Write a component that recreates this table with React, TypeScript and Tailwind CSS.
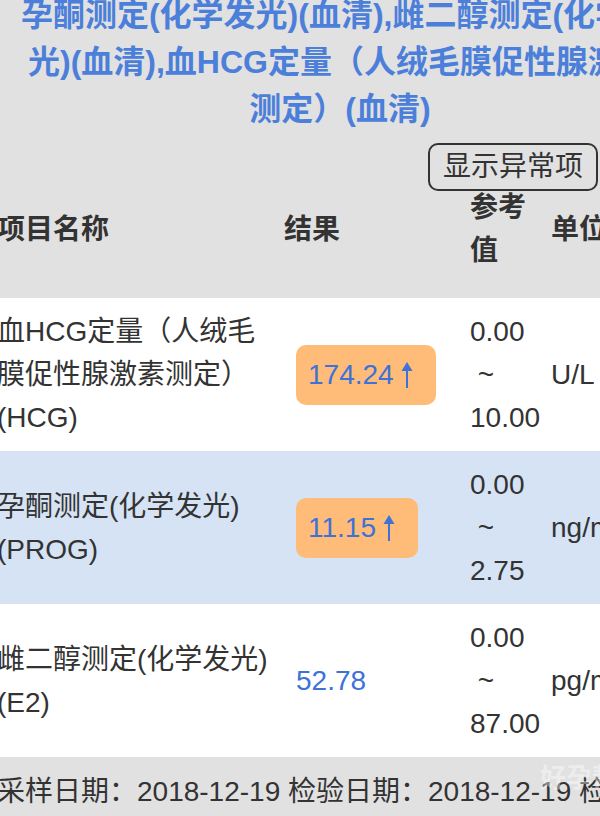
import React from "react";

type Item = {
  name: string[];
  result: string;
  high: boolean;
  low: string;
  up: string;
  unit: string;
  bg: string;
};

const items: Item[] = [
  {
    name: ["血HCG定量（人绒毛", "膜促性腺激素测定）", "(HCG)"],
    result: "174.24",
    high: true,
    low: "0.00",
    up: "10.00",
    unit: "U/L",
    bg: "bg-white",
  },
  {
    name: ["孕酮测定(化学发光)", "(PROG)"],
    result: "11.15",
    high: true,
    low: "0.00",
    up: "2.75",
    unit: "ng/mL",
    bg: "bg-[#d5e3f5]",
  },
  {
    name: ["雌二醇测定(化学发光)", "(E2)"],
    result: "52.78",
    high: false,
    low: "0.00",
    up: "87.00",
    unit: "pg/mL",
    bg: "bg-white",
  },
];

const UpArrow = () => (
  <svg width="14" height="28" viewBox="0 0 14 28" className="ml-[6px]">
    <path d="M7 1 L12.5 10 L1.5 10 Z" fill="#3d72d8" />
    <rect x="6" y="8" width="2" height="19" fill="#3d72d8" />
  </svg>
);

const Row: React.FC<{ item: Item }> = ({ item }) => {
  return (
    <div className={`grid grid-cols-[287px_186px_81px_1fr] items-center py-3 ${item.bg}`}>
      <div className="whitespace-nowrap leading-[43px]">
        {item.name.map((l) => (
          <div key={l}>{l}</div>
        ))}
      </div>
      <div className="pl-[12px]">
        {item.high ? (
          <div className="inline-flex h-[60px] items-center rounded-[10px] bg-[#ffbb78] pl-[12px] pr-[22px] text-[#3d72d8]">
            {item.result}
            <UpArrow />
          </div>
        ) : (
          <span className="text-[#3d72d8]">{item.result}</span>
        )}
      </div>
      <div className="whitespace-pre leading-[43px]">
        <div>{item.low}</div>
        <div>{" ~"}</div>
        <div>{item.up}</div>
      </div>
      <div className="whitespace-nowrap">{item.unit}</div>
    </div>
  );
};

export default function App() {
  return (
    <div
      className="h-[816px] w-[600px] overflow-hidden bg-[#e1e1e1] text-[28px] text-[#333333]"
      style={{ fontFamily: '"Liberation Sans", "Noto Sans CJK SC", sans-serif' }}
    >
      {/* title */}
      <div className="-ml-[60px] -mt-[8px] w-[800px] text-center text-[32px] font-bold leading-[47px] text-[#4b7fda]">
        <div className="whitespace-nowrap">孕酮测定(化学发光)(血清),雌二醇测定(化学发</div>
        <div className="whitespace-nowrap">光)(血清),血HCG定量（人绒毛膜促性腺激素</div>
        <div className="whitespace-nowrap">测定）(血清)</div>
      </div>

      <div className="mt-[10px] flex justify-end pr-[2px]">
        <button className="h-[48px] w-[170px] rounded-[10px] border-2 border-[#333333] text-[28px] leading-none text-[#333333]">
          显示异常项
        </button>
      </div>

      <div className="-ml-[3px] w-[700px]">
        {/* header */}
        <div className="-mt-[5px] mb-[26px] grid h-[86px] grid-cols-[287px_186px_81px_1fr] items-center font-bold leading-[43px]">
          <div>项目名称</div>
          <div>结果</div>
          <div>
            <div>参考</div>
            <div>值</div>
          </div>
          <div className="whitespace-nowrap">单位</div>
        </div>

        {items.map((it) => (
          <Row key={it.result} item={it} />
        ))}

        {/* footer */}
        <div className="relative flex h-[70px] items-center whitespace-nowrap bg-[#e1e1e1]">
          采样日期：2018-12-19 检验日期：2018-12-19 检验
          <div className="absolute left-[543px] top-[8px] text-[26px] font-bold leading-none text-white opacity-40">
            好孕帮
          </div>
        </div>
      </div>
    </div>
  );
}
